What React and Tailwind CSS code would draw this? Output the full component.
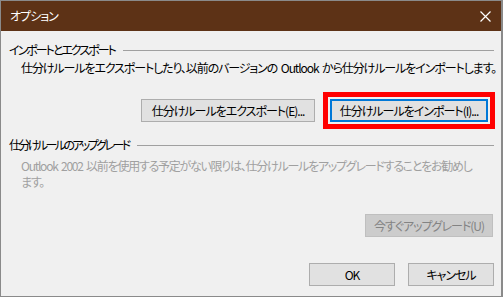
import React from 'react';

const font = "font-['Noto_Sans_CJK_JP',sans-serif] [font-feature-settings:'palt']";

const variants = {
  normal: 'border border-[#adadad] bg-[#e1e1e1] text-black',
  focused: 'border-2 border-[#0078d7] bg-[#e1e1e1] text-black',
  disabled: 'border border-[#bfbfbf] bg-[#cccccc] text-[#838383]',
};

const Button = ({ children, variant = 'normal', className = '' }) => (
  <div
    className={`flex items-center justify-center h-[23px] text-[12px] leading-none whitespace-nowrap tracking-[-1px] ${variants[variant]} ${className}`}
  >
    {children}
  </div>
);

const GroupHeader = ({ label, spacing }) => (
  <div className="flex items-center h-[16px] pl-[8px] pr-[7px]">
    <span className={`text-[12px] leading-[16px] text-black whitespace-nowrap ${spacing}`}>{label}</span>
    <div className="flex-1 h-px bg-[#a0a0a0] ml-[8px]" />
  </div>
);

export default function App() {
  return (
    <div className={`w-[503px] h-[297px] overflow-hidden flex flex-col border border-r-2 border-[#8a8a8a] bg-[#f0f0f0] ${font}`}>
      {/* Title bar */}
      <div className="h-[30px] shrink-0 flex items-center justify-between bg-[#5d3216] pl-[9px] pr-[10px]">
        <span className="text-[12px] text-white leading-none tracking-[-1px]">オプション</span>
        <svg width="11" height="11" viewBox="0 0 11 11">
          <path d="M0.5 0.5 L10.5 10.5 M10.5 0.5 L0.5 10.5" stroke="#ffffff" strokeWidth="1.2" fill="none" />
        </svg>
      </div>

      {/* Import / export */}
      <div className="mt-[11px]">
        <GroupHeader label="インポートとエクスポート" spacing="tracking-[-2px]" />
      </div>
      <p className="mt-[2px] pl-[20px] text-[12px] leading-[16px] text-black whitespace-nowrap tracking-[-1.1px] [word-spacing:2px]">
        仕分けルールをエクスポートしたり、以前のバージョンの Outlook から仕分けルールをインポートします。
      </p>
      <div className="mt-[16px] flex items-center justify-end gap-[8px] pr-[6px]">
        <Button className="w-[174px]">仕分けルールをエクスポート(E)...</Button>
        <div className="border-[5px] border-[#ff0000] p-[2px]">
          <Button variant="focused" className="w-[158px]">仕分けルールをインポート(I)...</Button>
        </div>
      </div>

      {/* Upgrade */}
      <div className="mt-[8px]">
        <GroupHeader label="仕分けルールのアップグレード" spacing="tracking-[-2.6px]" />
      </div>
      <p className="mt-[5px] pl-[20px] text-[12px] leading-[16px] text-[#a0a0a0] whitespace-nowrap tracking-[-1.25px] [word-spacing:2px]">
        Outlook 2002 以前を使用する予定がない限りは、仕分けルールをアップグレードすることをお勧めし
        <br />
        ます。
      </p>
      <div className="mt-[24px] flex justify-end pr-[8px]">
        <Button variant="disabled" className="w-[128px]">今すぐアップグレード(U)</Button>
      </div>

      {/* Footer */}
      <div className="mt-[26px] flex justify-end gap-[13px] pr-[7px]">
        <Button className="w-[86px]">OK</Button>
        <Button className="w-[86px]">キャンセル</Button>
      </div>
    </div>
  );
}
